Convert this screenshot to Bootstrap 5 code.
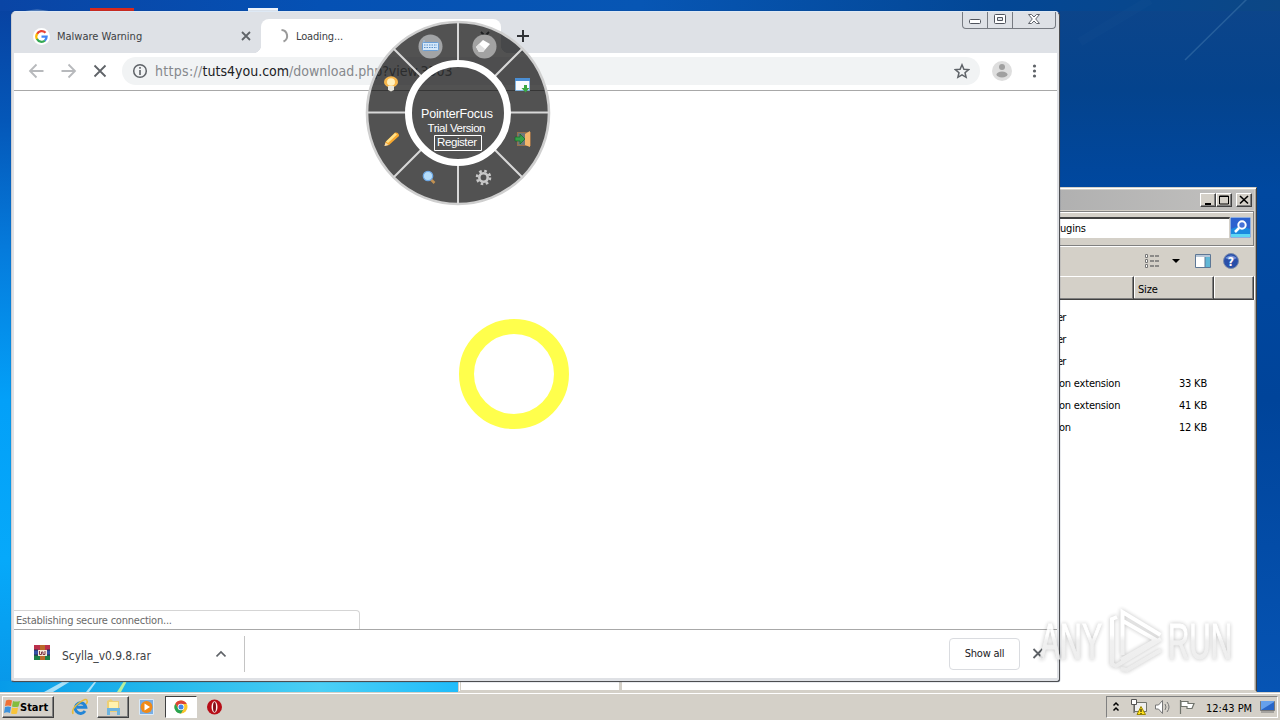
<!DOCTYPE html>
<html lang="en">
<head>
    <meta charset="UTF-8">
    <meta name="viewport" content="width=device-width, initial-scale=1">
    <title>Desktop</title>
    <link href="https://cdn.jsdelivr.net/npm/bootstrap@5.3.0/dist/css/bootstrap.min.css" rel="stylesheet">
    <script src="https://cdn.jsdelivr.net/npm/bootstrap@5.3.0/dist/js/bootstrap.bundle.min.js"></script>
    <style>
        body { font: 11px/14px "DejaVu Sans Condensed", "DejaVu Sans", sans-serif; font-stretch: condensed; color: #000; }
        svg { display: block; flex: none; }
        .desktop {
            width: 1280px; height: 720px;
            background:
                linear-gradient(90deg, #0a45a5 0, #0551b4 25%, #0756b4 50%, #034795 78%, #0c4785 100%) 0 0 / 100% 11px no-repeat,
                linear-gradient(180deg, #0d458a 0, #04438d 90px, #0048a0 190px, #00449a 400px, #0654b4 692px) 1059px 0 / 221px 100% no-repeat,
                linear-gradient(180deg, #0841a0 0, #0457b8 120px, #057bdc 250px, #03a0f8 400px, #06a9fa 560px, #0897e8 692px);
        }
        .wallpaper { left: 0; top: 0; }

        /* file explorer */
        .explorer { left: 458px; top: 187px; width: 799px; height: 505px; background: #d4d0c8; border: 1px solid #d4d0c8; border-right-color: #404040; box-shadow: inset 1px 1px #fff, inset -1px 0 #aaa49c; padding: 2px 2px 1px; }
        .ex-title { height: 20px; background: linear-gradient(90deg, #808080, #b0b0b0 75%, #c2c1bf); padding-right: 2px; }
        .cap-btn { width: 16px; height: 14px; background: #d4d0c8; border: 1px solid; border-color: #fff #404040 #404040 #fff; box-shadow: inset -1px -1px #808080; }
        .ex-address { height: 35px; margin-top: 1px; border: 1px solid #808080; border-left: 0; box-shadow: inset 0 1px #fff, 0 1px #fff; padding: 5px 2px 5px 0; }
        .ex-field { height: 21px; background: #fff; border-top: 2px solid #404040; border-right: 1px solid #d4d0c8; padding: 3px 0 0 599px; letter-spacing: -.2px; }
        .ex-tools { height: 30px; padding-right: 15px; }
        .ex-head { height: 24px; }
        .ex-head > div { border-top: 1px solid #fff; border-right: 1px solid #404040; border-bottom: 1px solid #404040; box-shadow: inset -1px -1px #808080, 1px 0 #fff; padding: 6px 0 0 4px; letter-spacing: -.2px; }
        .ex-list { background: #fff; padding-top: 7px; }
        .ex-row { height: 22px; padding-left: 598px; letter-spacing: -.2px; }
        .ex-type { width: 75px; }
        .ex-folder { letter-spacing: -.9px; margin-left: -2px; width: 77px; }
        .ex-size { width: 73px; }
        .ex-pane { left: 160px; top: 494px; width: 3px; height: 8px; background: #d4d0c8; }

        /* browser */
        .browser { left: 11px; top: 11px; width: 1049px; height: 671px; border: 1px solid #4c4d50; border-left-color: #c9ccd2; border-top-color: #dee9f5; border-radius: 5px 5px 3px 3px; background: #dfe1e5; padding: 0 2px 3px 2px; box-shadow: 0 0 1px #203a60; }
        .tab-strip { height: 41px; background: #dee1e6; padding-left: 19px; color: #3c4043; }
        .tab-one { width: 228px; padding: 7px 10px 0 0; }
        .tab-name { padding: 1px 0 0 7px; }
        .tab-two { width: 240px; height: 34px; margin-top: 7px; background: #fff; border-radius: 8px 8px 0 0; padding: 0 11px 0 14px; color: #3c4043; }
        .tab-two::before, .tab-two::after { content: ""; position: absolute; bottom: 0; width: 8px; height: 8px; }
        .tab-two::before { left: -8px; background: radial-gradient(circle at 0 0, transparent 8px, #fff 8.5px); }
        .tab-two::after { right: -8px; background: radial-gradient(circle at 100% 0, transparent 8px, #fff 8.5px); }
        .tab-loading { margin-left: 7px; padding-top: 2px; letter-spacing: -.15px; }
        .plus { margin: 18px 0 0 16px; }
        .win-ctl { width: 94px; height: 17px; margin-right: 1px; border: 1px solid #777b82; border-top: 0; border-radius: 0 0 4px 4px; }
        .win-ctl > div + div { border-left: 1px solid #777b82; }
        .toolbar { height: 38px; background: #fff; border-bottom: 1px solid #a8a8a8; padding: 0 0 1px 14px; }
        .omnibox { width: 858px; height: 28px; border-radius: 14px; background: #f1f3f4; margin-left: 14px; padding: 0 10px 1px 10px; font-size: 14px; line-height: 18px; color: #85888c; }
        .url { margin-left: 7px; }
        .scheme { letter-spacing: .3px; }
        .host { color: #202124; }
        .page { background: #fff; }
        .status { width: 346px; height: 19px; border: 1px solid #d5d5d5; border-width: 1px 1px 0 0; border-radius: 0 4px 0 0; color: #6a6a6a; padding: 3px 0 0 2px; letter-spacing: -.22px; }
        .shelf { height: 49px; background: #fff; border-top: 1px solid #a8a8a8; padding: 0 0 1px 20px; }
        .download { width: 211px; height: 36px; border-right: 1px solid #c4c4c4; padding-right: 18px; font-size: 12px; color: #3c4043; }
        .show-all { width: 71px; height: 32px; border: 1px solid #dadce0; border-radius: 4px; color: #202124; letter-spacing: -.25px; }
        .name-dl { margin: 5px 0 0 11px; letter-spacing: -.07px; }

        .overlay { left: 0; top: 0; pointer-events: none; }
        .watermark { filter: drop-shadow(0 0 2px rgba(0, 0, 0, .28)); }

        /* taskbar */
        .taskbar { left: 0; top: 692px; width: 1280px; height: 28px; background: #d4d0c8; box-shadow: inset 0 1px #d4d0c8, inset 0 2px #fff; padding: 2px 2px 0; }
        .raised { border: 1px solid; border-color: #fff #404040 #404040 #fff; box-shadow: inset -1px -1px #808080; }
        .start { width: 52px; height: 22px; font-weight: bold; }
        .start span { padding-top: 1px; }
        .task-btn { width: 32px; height: 22px; }
        .task-on { width: 32px; height: 22px; background: #fff; border: 1px solid; border-color: #404040 #fff #fff #404040; }
        .tray { width: 172px; height: 22px; border: 1px solid; border-color: #808080 #fff #fff #808080; padding: 0 1px 0 5px; }
    </style>
</head>
<body>
<div class="desktop position-relative overflow-hidden">

    <!-- wallpaper streaks and icons peeking above the window -->
    <svg class="wallpaper position-absolute" width="1280" height="720">
        <defs>
            <linearGradient id="floor"><stop offset="0" stop-color="#079be9"/><stop offset=".35" stop-color="#24b8eb"/><stop offset=".7" stop-color="#4bcff5"/><stop offset="1" stop-color="#20bcfa"/></linearGradient>
        </defs>
        <rect y="681" width="458" height="12" fill="url(#floor)"/>
        <path d="M44 692L64 681h7L53 692zM86 692l9-11h2l-8 11z" fill="#d9f4fc" opacity=".75"/>
        <path d="M117 692l7-11h3l-6 11z" fill="#b8ef9e"/>
        <path d="M1185 60L1248 -2" stroke="#3d75ab" stroke-width="1.500" opacity=".55"/>
        <path d="M1080 42L1150 0" stroke="#26609c" stroke-width="9" opacity=".1"/>
        <path d="M90 8h44v3H90z" fill="#d92a1c"/><path d="M248 8h30v3h-30z" fill="#eef4fb"/><path d="M25 10.500q12-1.500 24 0z" fill="#a9c4de"/>
    </svg>

    <!-- explorer window -->
    <div class="explorer position-absolute d-flex flex-column">
        <div class="ex-title d-flex align-items-center justify-content-end">
            <div class="cap-btn"><svg width="14" height="12"><path d="M4 9h6v2H4z"/></svg></div>
            <div class="cap-btn"><svg width="14" height="12"><path d="M2.500 2h9v8h-9zM2 2.500h10" fill="none" stroke="#000"/></svg></div>
            <div class="cap-btn ms-1"><svg width="14" height="12"><path d="M3 2l8 7.500M11 2L3 9.500" stroke="#000" stroke-width="1.600"/></svg></div>
        </div>
        <div class="ex-address d-flex">
            <div class="ex-field flex-grow-1">ugins</div>
            <svg width="21" height="21"><rect x=".5" y=".5" width="20" height="20" rx="1" fill="#2c62cf" stroke="#8daee0"/><path d="M1 12q9-5 19 0v8H1z" fill="#1b8adf"/><path d="M1 17h19v3H1z" fill="#5fd7f3"/><circle cx="12" cy="8" r="3.700" fill="#4672d8" stroke="#fff" stroke-width="2"/><path d="M9 11l-4 4" stroke="#fff" stroke-width="2.500"/></svg>
        </div>
        <div class="ex-tools d-flex align-items-center justify-content-end">
            <svg width="17" height="16"><g fill="#fff" stroke="#777"><path d="M1.500 1.500h2v3h-2zM1.500 6.500h2v3h-2zM1.500 11.500h2v3h-2z"/></g><path d="M6 3h4m1 0h4M6 8h4m1 0h4M6 13h4m1 0h4" stroke="#737373" stroke-width="1.300"/></svg>
            <svg width="33" height="16"><path d="M11 6h8l-4 4z"/></svg>
            <svg width="17" height="16"><path d="M1.500 1.500h15v13h-15z" fill="#fff" stroke="#5d7795"/><path d="M2 2h14v2H2z" fill="#b8c7d8"/><path d="M11 4h5v10h-5z" fill="#61b7d6"/><path d="M11 4v10" stroke="#5d7795"/></svg>
            <svg class="ms-2" width="20" height="18"><circle cx="12" cy="9" r="7.500" fill="#294fa9" stroke="#7b8cab"/><path d="M6 6q6-5 12 0q-5 3-12 0" fill="#7592d8"/><text x="8.700" y="13.500" font-size="12" font-weight="bold" fill="#fff">?</text></svg>
        </div>
        <div class="ex-head d-flex">
            <div class="flex-grow-1"></div>
            <div style="width:80px">Size</div>
            <div style="width:40px"></div>
        </div>
        <div class="ex-list flex-grow-1" id="fileRows"></div>
        <div class="ex-pane position-absolute"></div>
    </div>

    <!-- browser window -->
    <div class="browser position-absolute d-flex flex-column">
        <div class="tab-strip d-flex">
            <div class="tab-one d-flex align-items-center">
                <svg width="17" height="17" viewBox="0 0 17 17"><circle cx="8.500" cy="8.500" r="8.500" fill="#fff"/><g fill="none" stroke-width="2.300"><path d="M12.500 4.700A5.200 5.200 0 0 0 4 6" stroke="#ea4335"/><path d="M4.200 5.600a5.300 5.300 0 0 0 0 5.800" stroke="#fbbc05"/><path d="M4 11a5.200 5.200 0 0 0 8 1.500" stroke="#34a853"/><path d="M8.500 8.600h5.100a5.200 5.200 0 0 1-1.800 4" stroke="#4285f4"/></g></svg>
                <span class="tab-name me-auto">Malware Warning</span>
                <svg width="10" height="10"><path d="M1 1l8 8M9 1L1 9" stroke="#5f6368" stroke-width="1.800"/></svg>
            </div>
            <div class="tab-two position-relative d-flex align-items-center">
                <svg width="14" height="16"><path d="M6.500 2a6 6 0 0 1 2 11.500" fill="none" stroke="#9a9a9a" stroke-width="2"/></svg>
                <span class="tab-loading me-auto">Loading...</span>
                <svg width="10" height="10"><path d="M1 1l8 8M9 1L1 9" stroke="#5f6368" stroke-width="1.800"/></svg>
            </div>
            <svg class="plus" width="12" height="12"><path d="M6 0v12M0 6h12" stroke="#303236" stroke-width="2"/></svg>
            <div class="win-ctl d-flex ms-auto">
                <div><svg width="24" height="16"><rect x="6.500" y="7.500" width="11" height="4" rx="1" fill="#fff" stroke="#50545d"/></svg></div>
                <div><svg width="24" height="16"><rect x="6.500" y="2.500" width="11" height="9" rx="1" fill="#fff" stroke="#50545d"/><path d="M9.500 5.500h5v3h-5z" fill="#dee1e6" stroke="#50545d"/></svg></div>
                <div><svg width="42" height="16"><path d="M15.500 2.500h3l2.500 2.500 2.500-2.500h3L22.700 7l3.800 4.500h-3L21 9l-2.500 2.500h-3L19.300 7z" fill="#fff" stroke="#60646c"/></svg></div>
            </div>
        </div>
        <div class="toolbar d-flex align-items-center">
            <svg width="80" height="18" fill="none" stroke-width="1.800"><path d="M15.500 9H2M8.500 2.500L2 9l6.500 6.500M33.500 9H47M40.500 2.500L47 9l-6.500 6.500" stroke="#b7b9bc"/><path d="M66.500 3.500l11 11M77.500 3.500l-11 11" stroke="#5f6368"/></svg>
            <div class="omnibox d-flex align-items-center">
                <svg width="16" height="16"><circle cx="8" cy="8" r="6.300" fill="none" stroke="#5f6368" stroke-width="1.500"/><path d="M7.200 7h1.600v5H7.200zM7.200 4h1.600v1.800H7.200z" fill="#5f6368"/></svg>
                <span class="url"><span class="scheme">https://</span><span class="host">tuts4you.com</span>/download.php?view.3503</span>
                <svg class="ms-auto" width="16" height="16"><path d="M8 1.800l1.900 4.400 4.700.4-3.600 3.100 1.100 4.600L8 11.900l-4.100 2.400L5 9.700 1.400 6.600l4.700-.4z" fill="none" stroke="#5f6368" stroke-width="1.500"/></svg>
            </div>
            <svg class="ms-2" width="60" height="22"><circle cx="14" cy="11" r="10" fill="#dedede"/><circle cx="14" cy="7" r="3" fill="#a0a0a0"/><ellipse cx="14" cy="14.500" rx="5.500" ry="3" fill="#a0a0a0"/><g fill="#5f6368"><circle cx="46.500" cy="6" r="1.600"/><circle cx="46.500" cy="11" r="1.600"/><circle cx="46.500" cy="16" r="1.600"/></g></svg>
        </div>
        <div class="page flex-grow-1 d-flex align-items-end">
            <div class="status">Establishing secure connection...</div>
        </div>
        <div class="shelf d-flex align-items-center">
            <div class="download d-flex align-items-center">
                <svg width="17" height="18"><path d="M0 0h16v5H0z" fill="#bb304b"/><path d="M0 5h16v5H0z" fill="#3552a5"/><path d="M0 10h16v5H0z" fill="#1d8047"/><path d="M6 0h5v15H6z" fill="#ba6a29"/><path d="M4 5h9v6H4z" fill="#f6e9d9"/><path d="M5.500 6v3.500h2V7h1.500v2.500h2V6" fill="none" stroke="#813545"/><path d="M0 5h4M13 5h3M0 10h4m9 0h3" stroke="#292a52"/></svg>
                <span class="name-dl">Scylla_v0.9.8.rar</span>
                <svg class="ms-auto" width="10" height="8"><path d="M.5 6.500L5 2l4.500 4.500" fill="none" stroke="#5f6368" stroke-width="1.700"/></svg>
            </div>
            <div class="show-all d-flex align-items-center justify-content-center ms-auto">Show all</div>
            <svg width="37" height="12"><path d="M13.500 1l9 9M22.500 1l-9 9" stroke="#5f6368" stroke-width="1.800"/></svg>
        </div>
    </div>

    <!-- pointer tool wheel, click ring and watermark lie over everything -->
    <svg class="overlay position-absolute" width="1280" height="720">
        <defs>
            <linearGradient id="shine" x1="0" y1="610" x2="0" y2="672" gradientUnits="userSpaceOnUse"><stop offset=".4" stop-color="#fff"/><stop offset=".5" stop-color="#efefef"/><stop offset="1" stop-color="#e9e9e9"/></linearGradient>
        </defs>
        <circle cx="458" cy="113" r="91" fill="#000" fill-opacity=".68"/>
        <circle cx="458" cy="113" r="91" fill="none" stroke="#cfcfcf" stroke-width="2.600"/>
        <path d="M458 22v41M458 163v41M367 112.500h41M508 112.500h41M393.700 48.700l29 29M493.300 148.300l29 29M522.300 48.700l-29 29M422.700 148.300l-29 29" stroke="#d8d8d8" stroke-width="2"/>
        <circle cx="458" cy="113" r="49.500" fill="none" stroke="#fff" stroke-width="7"/>
        <g fill="#fff" font-family="Liberation Sans, sans-serif">
            <text x="421" y="118" font-size="12.500" textLength="72">PointerFocus</text>
            <text x="427.500" y="132" font-size="11.500" textLength="58">Trial Version</text>
            <text x="437" y="146" font-size="11.500" textLength="40">Register</text>
        </g>
        <path d="M434.500 135.500h47v15h-47z" fill="none" stroke="#fff"/>
        <!-- keyboard -->
        <circle cx="430.500" cy="46.500" r="12" fill="#a2a4a6"/>
        <path d="M424 40v3h7v3" fill="none" stroke="#9cc6ec"/><rect x="422.500" y="42.500" width="16" height="8" rx="1" fill="#d6e9fa" stroke="#6b9fd6"/><path d="M424 45h13M424 47.500h13" stroke="#5b90cb" stroke-dasharray="1.500 1"/>
        <!-- eraser -->
        <circle cx="484.500" cy="46.500" r="12" fill="#a2a2a2"/>
        <path d="M476 47l7-7 7 4-7 8h-4z" fill="#fff"/><path d="M476 47l3-3 6 5-2 3h-4z" fill="#e0e0e0"/>
        <!-- bulb -->
        <path d="M384 82a7 5.800 0 0 1 14 0q0 3-4 5h-6q-4-2-4-5z" fill="#f7b64b"/><ellipse cx="391" cy="82" rx="4" ry="3.800" fill="#fff0bd"/><path d="M388 86h6v4l-3 1.500-3-1.500z" fill="#e8e5db"/>
        <!-- window with arrow -->
        <path d="M515.500 78.500h14v12h-14z" fill="#f8fbff" stroke="#7fb2df"/><path d="M515 78h15v3h-15z" fill="#4b8fd5"/><path d="M524 85h3v3h2.500l-4 4.500-4-4.500h2.500z" fill="#3aa842"/>
        <!-- pencil -->
        <path d="M384.500 146l1-4 9.500-9.500q4-.5 4 3.500l-10 9z" fill="#f8a82f"/><path d="M386 141.500l9-8.500 2 1.500-9 8.500z" fill="#ffe28a"/><path d="M384.500 146l1-3.500 3 2.500z" fill="#f5dfb4"/>
        <!-- exit door -->
        <path d="M517 132h14v14h-14z" fill="#946f4d"/><path d="M518 133h7v12h-7z" fill="#70777a"/><path d="M525 134l5-3v16l-5-2z" fill="#f4b66b"/><path d="M515 137h5v-3l5 5-5 5v-3h-5z" fill="#36a249" stroke="#17652a" stroke-width=".7"/>
        <!-- magnifier -->
        <path d="M430.500 179l4 4" stroke="#c29152" stroke-width="2.500"/><circle cx="428" cy="176" r="4.700" fill="#b5ddfa" stroke="#6fa8e4" stroke-width="1.300"/>
        <!-- gear -->
        <circle cx="483.500" cy="177.500" r="4.200" fill="none" stroke="#c8c8c8" stroke-width="2.600"/><circle cx="483.500" cy="177.500" r="6.500" fill="none" stroke="#c8c8c8" stroke-width="2.600" stroke-dasharray="2.550 2.550"/>
        <circle cx="514" cy="374" r="47.500" fill="none" stroke="#ffff4c" stroke-width="15"/>
        <!-- watermark -->
        <g class="watermark" opacity=".88">
            <g font-family="Liberation Sans, sans-serif" font-size="50" fill="url(#shine)" stroke="url(#shine)" stroke-width="1">
                <text x="1040" y="659" textLength="62" lengthAdjust="spacingAndGlyphs">ANY</text>
                <text x="1168" y="659" textLength="64" lengthAdjust="spacingAndGlyphs">RUN</text>
            </g>
            <path d="M1117 617l-5 2v45l4 2 45-27M1122.500 655v-43l38 23M1123 621l33 19-35 20M1121 669l6 1 34-20" fill="none" stroke="url(#shine)" stroke-width="4"/>
        </g>
    </svg>

    <!-- taskbar -->
    <div class="taskbar position-absolute d-flex align-items-center">
        <div class="start raised d-flex align-items-center"><svg width="17" height="18"><path d="M3 2.500q3-1.500 6 0L8 8q-3-1-6 0z" fill="#ef7034"/><path d="M10 3q3 1 7 0L15.500 8.500q-3 1-6.500 0z" fill="#82bd3f"/><path d="M2 9q3-1 6 0l-1 6q-3-1.500-6 0z" fill="#3c92dc"/><path d="M9 9.500q3 1 6 0l-1 6q-3 1-6 0z" fill="#f8c439"/></svg><span>Start</span></div>
        <svg class="ms-3" width="27" height="20"><path d="M15 14a5.300 5.300 0 1 1 .8-3.700H7" fill="none" stroke="#2385d6" stroke-width="3"/><path d="M3 17Q1 12 9 6t8-2q1 1-1 3" fill="none" stroke="#e8bb38" stroke-width="1.500"/></svg>
        <div class="task-btn raised d-flex align-items-center justify-content-center"><svg width="18" height="18"><path d="M3 3l4-2 2 2h6v11H3z" fill="#edcf75"/><path d="M5 4h9v8H5z" fill="#fff2af"/><path d="M3 17v-7h13v7h-3v-4H6v4z" fill="#6eb4df"/></svg></div>
        <svg class="ms-2" width="28" height="20"><path d="M2.500 2.500h14v15h-14z" fill="#78ade4" stroke="#d9e9f7"/><circle cx="9.500" cy="10" r="6" fill="#f08a18"/><path d="M7.500 6.500v7l5.500-3.500z" fill="#fff"/></svg>
        <div class="task-on d-flex align-items-center justify-content-center"><svg width="16" height="16" viewBox="0 0 16 16"><circle cx="8" cy="8" r="6.500" fill="#fbc52c"/><path d="M2.300 4.700A6.500 6.500 0 0 1 13.800 5H8L5 9z" fill="#db4336"/><path d="M2.300 4.700A6.500 6.500 0 0 0 8 14.500L10.500 10 5.500 10z" fill="#28a452"/><circle cx="8" cy="8" r="3.300" fill="#fff"/><circle cx="8" cy="8" r="2.500" fill="#4285e8"/></svg></div>
        <svg class="ms-2" width="20" height="18"><circle cx="9.500" cy="9" r="7.500" fill="#b70d17"/><ellipse cx="9.500" cy="9" rx="3" ry="5.800" fill="#fff3f0"/><ellipse cx="9.500" cy="9" rx="1.500" ry="5" fill="#84101a"/></svg>
        <div class="tray d-flex align-items-center ms-auto">
            <svg width="18" height="20"><path d="M1.500 8.500l2.500-2.500 2.500 2.500M1.500 13.500L4 11l2.500 2.500" fill="none" stroke="#000" stroke-width="1.500"/></svg>
            <svg width="24" height="20"><path d="M4.500 5.500h12v9h-12z" fill="#eee" stroke="#70736c"/><path d="M1.500 2.500h5v5h-5zM4 7v9" fill="#fff" stroke="#555"/><path d="M7 17.500L11 9.500l4.500 8z" fill="#ffe11d" stroke="#9a8500"/><path d="M11 12v3m0 1v1" stroke="#000"/></svg>
            <svg width="25" height="20"><path d="M1.500 8h3l4-4.500v13l-4-4.500h-3z" fill="#fff" stroke="#777"/><path d="M11 7q2 3 0 6M13 5q4 5 0 10" fill="none" stroke="#777"/></svg>
            <svg width="27" height="20"><path d="M1.500 3v14M2 4.500h7v2h6l-2 5H8v-2H2z" fill="#fff" stroke="#70736c" stroke-width="1.200"/></svg>
            <span class="pt-1">12:43 PM</span>
            <svg class="ms-auto" width="17" height="16"><path d="M1.500 2.500h14v9h-14z" fill="#2866c8" stroke="#777"/><path d="M2 11l13-8v-1H2z" fill="#65a0ec"/><path d="M2 13h13" stroke="#777"/></svg>
        </div>
    </div>
</div>

<script>
    const files = [
        { type: "er", size: "" },
        { type: "er", size: "" },
        { type: "er", size: "" },
        { type: "on extension", size: "33 KB" },
        { type: "on extension", size: "41 KB" },
        { type: "on", size: "12 KB" }
    ];
    document.getElementById("fileRows").innerHTML = files.map(f =>
        `<div class="ex-row d-flex align-items-center"><span class="ex-type text-nowrap ${f.size ? "" : "ex-folder"}">${f.type}</span><span class="ex-size text-end text-nowrap">${f.size}</span></div>`
    ).join("");
</script>
</body>
</html>
